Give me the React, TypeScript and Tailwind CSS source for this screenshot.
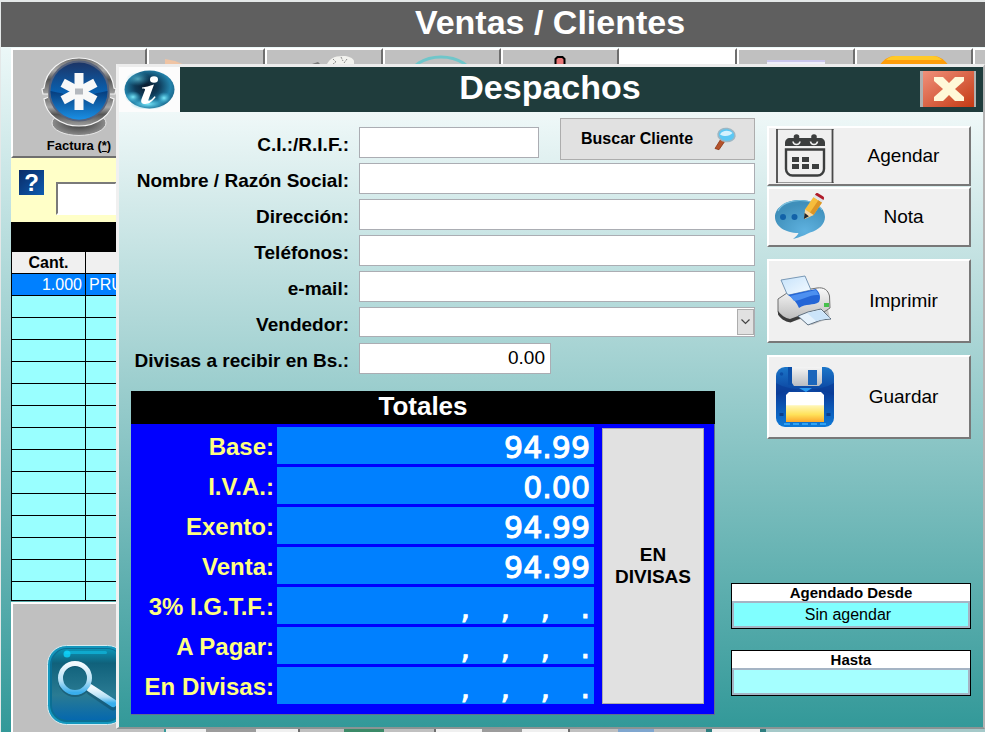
import type { ReactNode } from 'react';

const EMPTY_ROWS = Array.from({ length: 13 }, (_, i) => i);

const CUSTOMER_FIELDS = [
  { id: 'nombre', label: 'Nombre / Razón Social:' },
  { id: 'direccion', label: 'Dirección:' },
  { id: 'telefonos', label: 'Teléfonos:' },
  { id: 'email', label: 'e-mail:' },
];

const TOTALS = [
  { label: 'Base:', value: '94.99' },
  { label: 'I.V.A.:', value: '0.00' },
  { label: 'Exento:', value: '94.99' },
  { label: 'Venta:', value: '94.99' },
  { label: '3% I.G.T.F.:', value: null },
  { label: 'A Pagar:', value: null },
  { label: 'En Divisas:', value: null },
];

/* ---------- icons ---------- */

function FacturaIcon() {
  return (
    <svg width="76" height="80" viewBox="0 0 76 80" aria-hidden="true">
      <defs>
        <linearGradient id="fRing" x1="0" y1="0" x2="0" y2="1">
          <stop offset="0" stopColor="#6c6c6c" />
          <stop offset="0.35" stopColor="#a8a8a8" />
          <stop offset="0.6" stopColor="#555" />
          <stop offset="1" stopColor="#a0a0a0" />
        </linearGradient>
        <linearGradient id="fTop" x1="0" y1="0" x2="0" y2="1">
          <stop offset="0" stopColor="#1c3566" />
          <stop offset="0.5" stopColor="#0a5fae" />
          <stop offset="1" stopColor="#0b7fd6" />
        </linearGradient>
        <linearGradient id="fLow" x1="0" y1="0" x2="0" y2="1">
          <stop offset="0" stopColor="#063c7c" />
          <stop offset="1" stopColor="#1a8fe4" />
        </linearGradient>
        <radialGradient id="fShadow">
          <stop offset="0" stopColor="#303030" />
          <stop offset="1" stopColor="#8d8d8d" />
        </radialGradient>
      </defs>
      <ellipse cx="38" cy="66" rx="27" ry="12.500" fill="url(#fShadow)" stroke="#e6e6e6" strokeWidth="1" />
      <path d="M3 31C5 13 20 1 38 1s33 12 35 30l2 1-1 5h-72l-1-5z" fill="url(#fRing)" stroke="#f4f4f4" strokeWidth="1.200" />
      <path d="M3 42c2 16 17 27 35 27s33-11 35-27l-5-2H8z" fill="url(#fRing)" stroke="#f4f4f4" strokeWidth="1.200" />
      <path d="M7 34h62v10H7z" fill="#8a8a8a" />
      <circle cx="38" cy="34" r="30.500" fill="#56627c" />
      <circle cx="38" cy="34" r="28.500" fill="url(#fTop)" />
      <path d="M9.500 34c10 2 16 3 28.500 8 12-5 18-6 28.500-8a28.500 28.500 0 0 1-57 0z" fill="url(#fLow)" />
      <g fill="#f8f8f8">
        <rect x="33.500" y="16" width="9" height="37" />
        <rect x="33.500" y="16" width="9" height="37" transform="rotate(62 38 34.500)" />
        <rect x="33.500" y="16" width="9" height="37" transform="rotate(-62 38 34.500)" />
      </g>
      <rect x="34" y="31.500" width="8" height="6" fill="#b4b8be" />
    </svg>
  );
}

function SearchTileIcon() {
  return (
    <svg width="80" height="80" viewBox="0 0 80 80" className="shrink-0" aria-hidden="true">
      <defs>
        <linearGradient id="sBg" x1="0" y1="0" x2="0" y2="1">
          <stop offset="0" stopColor="#0b93b4" />
          <stop offset="0.2" stopColor="#10617b" />
          <stop offset="0.65" stopColor="#2a7b93" />
          <stop offset="1" stopColor="#0568ae" />
        </linearGradient>
        <linearGradient id="sGlass" x1="0" y1="0" x2="0" y2="1">
          <stop offset="0" stopColor="#f2fafe" />
          <stop offset="0.6" stopColor="#b4e0f6" />
          <stop offset="1" stopColor="#3aaeec" />
        </linearGradient>
      </defs>
      <rect x="0.500" y="0.500" width="79" height="79" rx="19" fill="#1497bd" stroke="#d8ecf1" strokeWidth="1" />
      <rect x="3" y="3" width="74" height="74" rx="17" fill="#0b6f94" />
      <rect x="5" y="4" width="70" height="71" rx="15" fill="url(#sBg)" />
      <rect x="18" y="6" width="42" height="3" rx="1.500" fill="#0fa9cd" />
      <circle cx="20" cy="9" r="3.500" fill="#0ed7ff" opacity="0.8" />
      <path d="M44 46L66 61" stroke="#0b3f57" strokeWidth="9" strokeLinecap="round" opacity="0.4" />
      <circle cx="28" cy="35" r="15" fill="none" stroke="#0b3f57" strokeWidth="4" opacity="0.4" />
      <path d="M43 43L66 58" stroke="url(#sGlass)" strokeWidth="8" strokeLinecap="round" />
      <circle cx="28" cy="33" r="14.500" fill="none" stroke="url(#sGlass)" strokeWidth="5" />
    </svg>
  );
}

function InfoIcon() {
  return (
    <svg width="51" height="39" viewBox="0 0 51 39" aria-hidden="true">
      <defs>
        <radialGradient id="iBg" cx="0.45" cy="0.42" r="0.6">
          <stop offset="0" stopColor="#0a1a2c" />
          <stop offset="0.4" stopColor="#0e3a58" />
          <stop offset="0.78" stopColor="#2383ab" />
          <stop offset="1" stopColor="#1b6488" />
        </radialGradient>
        <radialGradient id="iGlow">
          <stop offset="0" stopColor="#7ce8f8" />
          <stop offset="1" stopColor="#3fb4d6" stopOpacity="0" />
        </radialGradient>
      </defs>
      <ellipse cx="25.500" cy="19.500" rx="25" ry="19" fill="url(#iBg)" />
      <ellipse cx="14" cy="9" rx="12" ry="7" fill="url(#iGlow)" opacity="0.6" />
      <ellipse cx="24" cy="34" rx="18" ry="6" fill="url(#iGlow)" />
      <ellipse cx="40" cy="28" rx="7" ry="6" fill="url(#iGlow)" />
      <ellipse cx="9" cy="27" rx="8" ry="6" fill="url(#iGlow)" />
      <ellipse cx="30" cy="9.500" rx="4" ry="3.300" fill="#fff" />
      <path d="M18 17.500c4-.5 7-1.500 12-3l-5.500 15c-.6 1.700.8 1.700 2.200.6 1.600-1.200 2.600-2.400 3.800-3.800l1.200.8c-3 4.200-6.500 7-10.500 7-3.600 0-4.800-2.200-3.600-5.400l3.400-8.700c.5-1.300-.8-1.500-3-1.500z" fill="#fff" />
    </svg>
  );
}

function MagnifierIcon() {
  return (
    <svg width="24" height="24" viewBox="0 0 24 24" aria-hidden="true">
      <path d="M8.500 11L2 21.500l4 1.200L12 14z" fill="#b5532c" stroke="#8a3513" strokeWidth="0.800" />
      <ellipse cx="13.500" cy="8" rx="8.500" ry="6.500" fill="#5cc8f4" stroke="#9db7c4" strokeWidth="1.600" transform="rotate(8 13.500 8)" />
      <path d="M7 7.500c2-4 8.500-5 12.500-1.500-3 3.500-8 4-12.500 1.500z" fill="#d4f2fe" />
    </svg>
  );
}

function CalendarIcon() {
  return (
    <svg width="58" height="54" viewBox="0 0 58 54" aria-hidden="true">
      <path d="M0 .5h58M0 53.500h58" stroke="#9a9a9a" />
      <path d="M1 0v54M56.500 0v54" stroke="#4a4a4a" strokeWidth="1.800" />
      <path d="M9 17v-3c0-3 2-5 5-5h30c3 0 5 2 5 5v3z" fill="#3c3e3e" />
      <circle cx="20.500" cy="8" r="2.800" fill="#3c3e3e" />
      <circle cx="38" cy="8" r="2.800" fill="#3c3e3e" />
      <path d="M17 12.500c.5 4 6.500 4 7 0M34.500 12.500c.5 4 6.500 4 7 0" fill="none" stroke="#f0f0f0" strokeWidth="1.600" />
      <path d="M10 20.500h38V40a6.500 6.500 0 0 1-6.500 6.500h-25A6.500 6.500 0 0 1 10 40z" fill="none" stroke="#3c3e3e" strokeWidth="2.400" />
      <path d="M16 28h7v5h-7zM26 28h7v5h-7zM16 35h7v5h-7zM26 35h7v5h-7zM36 35h7v5h-7z" fill="#3c3e3e" />
    </svg>
  );
}

function NoteIcon() {
  return (
    <svg width="58" height="48" viewBox="0 0 58 48" className="-ml-px" aria-hidden="true">
      <defs>
        <radialGradient id="nBg" cx="0.6" cy="0.8" r="0.7">
          <stop offset="0" stopColor="#5fb2e0" />
          <stop offset="1" stopColor="#3f8fba" />
        </radialGradient>
      </defs>
      <path d="M25 7c14 0 25 7.500 25 17 0 7-6 13-15 15.500-4 2-9 4.500-17 6.500 3-2.500 5-4.500 5.500-6C10 40 0 33 0 24 0 14.500 11 7 25 7z" fill="url(#nBg)" />
      <path d="M3 18C6 11 15 7.500 25 7.500S44 11 47 17" fill="none" stroke="#7cc0de" strokeWidth="1.200" />
      <circle cx="8" cy="24" r="3" fill="#1262a8" />
      <circle cx="19.500" cy="24" r="3" fill="#1262a8" />
      <path d="M30 16.500L38.500 4l8.500 5.500-8.500 12.500-9 4z" fill="#f6bd3c" />
      <path d="M35 19.500L43.500 7l3.500 2.500L38.500 22z" fill="#dc9526" />
      <path d="M30 16.500l8.500 5.500-9 4z" fill="#f3d6a5" />
      <path d="M29.700 20l4.200 3.200-5 2.800z" fill="#22262c" />
      <path d="M38.500 4l1.500-2.500 8.500 5.500-1.500 2.500z" fill="#dfe4e8" />
      <path d="M40 1.800c.8-1.600 1.800-2.200 3-1.500l5 3c1.300.8 1.300 2 .5 3.700z" fill="#b01c2a" />
    </svg>
  );
}

function PrinterIcon() {
  return (
    <svg width="58" height="52" viewBox="0 0 58 52" aria-hidden="true">
      <defs>
        <linearGradient id="pBody" x1="0" y1="0" x2="0" y2="1">
          <stop offset="0" stopColor="#fafafa" />
          <stop offset="1" stopColor="#b9b9b9" />
        </linearGradient>
        <linearGradient id="pPaper" x1="0" y1="0" x2="1" y2="1">
          <stop offset="0" stopColor="#c5e2fb" />
          <stop offset="1" stopColor="#f5fbff" />
        </linearGradient>
      </defs>
      <path d="M2 38l12 9 12-3 10 6 18-7-2-8z" fill="#8b8b8b" opacity="0.4" />
      <path d="M2 24l9-6 30-5c7-1 11 2 12.500 8l.5 12-6 4-24 5-10 4c-5-1-9-4-12-9z" fill="url(#pBody)" stroke="#6f6f6f" strokeWidth="1" />
      <path d="M11 19L5 5l24-4 6 14-22 5z" fill="url(#pPaper)" stroke="#6d8fae" strokeWidth="0.900" />
      <path d="M2 36c3 4 7 7 12 8l11-4 .5 3-11 4.500c-6-1-10-4-12.500-8z" fill="#3c3c3c" />
      <path d="M12 20l28-6c4 4 5 8 3 13-6 4-13 1-20 6-2-5-6-10-11-13z" fill="#2465d6" />
      <path d="M14 21l26-6 3 5c-9-1-16 5-25 6z" fill="#4d90f0" />
      <path d="M22 41l10-4 13-3 10 10-10 1-13 5z" fill="#e6f2fc" stroke="#5d6f80" strokeWidth="1" />
      <path d="M31 38l13-3 10 8-14 3z" fill="#cbe4fa" />
      <rect x="48" y="28" width="5" height="4" fill="#46c04c" />
    </svg>
  );
}

function FloppyIcon() {
  return (
    <svg width="58" height="60" viewBox="0 0 58 60" aria-hidden="true">
      <defs>
        <linearGradient id="dBody" x1="0" y1="0" x2="0" y2="1">
          <stop offset="0" stopColor="#1b76c9" />
          <stop offset="0.45" stopColor="#0a3f9c" />
          <stop offset="1" stopColor="#0f7ad8" />
        </linearGradient>
        <linearGradient id="dLabel" x1="0" y1="0" x2="0" y2="1">
          <stop offset="0.42" stopColor="#ffffff" />
          <stop offset="0.46" stopColor="#fff6b4" />
          <stop offset="0.75" stopColor="#ffe25a" />
          <stop offset="1" stopColor="#fba62c" />
        </linearGradient>
        <linearGradient id="dMetal" x1="0" y1="0" x2="0" y2="1">
          <stop offset="0" stopColor="#f4f4f4" />
          <stop offset="1" stopColor="#b8bcc2" />
        </linearGradient>
      </defs>
      <rect width="58" height="60" rx="9" fill="url(#dBody)" />
      <path d="M0 16c14 9 44 9 58 0v12c-16-7-42-7-58 0z" fill="#0a3a94" opacity="0.6" />
      <path d="M12 0h4v18h-4z" fill="#0b4ea8" />
      <path d="M16 0h30v16l-3 3H18l-2-3z" fill="url(#dMetal)" />
      <rect x="32" y="3" width="9" height="15" fill="#1c66bb" />
      <path d="M23 21h13l-6 4z" fill="#2a9af0" />
      <path d="M10 28l3-3h32l3 3v27H10z" fill="url(#dLabel)" />
      <path d="M8 57h42" stroke="#2fa3f4" strokeWidth="2" strokeDasharray="6 3" />
      <circle cx="5.500" cy="7" r="1.800" fill="#0c4fa8" />
      <rect x="3.500" y="46" width="4" height="3" fill="#0a3f8c" />
      <rect x="50.500" y="46" width="4" height="3" fill="#0a3f8c" />
    </svg>
  );
}

/* ---------- window behind the dialog ---------- */

function ToolTile({ children, white }: { children?: ReactNode; white?: boolean }) {
  return (
    <div
      className={`flex w-[118px] shrink-0 justify-center border-2 border-t-white border-r-[#6e6e6e] border-b-[#808080] border-l-white pt-[5px] ${
        white ? 'bg-white' : 'bg-[#c0c0c0]'
      }`}
    >
      {children}
    </div>
  );
}

function SalesWindow() {
  return (
    <div className="flex h-full flex-col border-t-2 border-l border-t-[#e4e8e8] border-l-[#e4e8e8] bg-linear-to-b/srgb from-[#f8fefe] to-[#339999]">
      <h1 className="flex h-[45px] shrink-0 items-center justify-center bg-[#5f5f5f] pb-1 pl-[114px] text-[34px] font-bold text-white">
        Ventas / Clientes
      </h1>
      <div className="flex min-h-0 flex-1 flex-col pt-px pl-[10px]">
        <div className="flex h-[110px] shrink-0 overflow-hidden">
          <button
            type="button"
            className="flex w-[136px] shrink-0 flex-col items-center border-2 border-t-white border-r-[#6e6e6e] border-b-[#6e6e6e] border-l-white bg-[#c0c0c0] pt-[7px] text-[13px] leading-[18px] font-bold"
          >
            <FacturaIcon />
            <span>
              Factura (<u>*</u>)
            </span>
          </button>
          <ToolTile>
            <svg width="82" height="20" viewBox="0 0 82 20" aria-hidden="true">
              <path d="M0 4l10 2 10 4v10H0z" fill="#efc4a4" />
            </svg>
          </ToolTile>
          <ToolTile>
            <svg width="60" height="20" viewBox="0 0 60 20" aria-hidden="true">
              <path d="M18 9l6-2 3 3v8H18z" fill="#777" />
              <path d="M32 12c2-8 8-11 17-11s12 4 14 12v7H32z" fill="#f2f2ee" />
              <path d="M39 4l3 3-3 2M47 2l2 4M53 4l-3 4" fill="none" stroke="#8b8b8b" strokeDasharray="2 1" />
            </svg>
          </ToolTile>
          <ToolTile>
            <svg width="70" height="20" viewBox="0 0 70 20" aria-hidden="true">
              <ellipse cx="34" cy="22" rx="31" ry="20" fill="none" stroke="#6fc6ca" strokeWidth="3" />
            </svg>
          </ToolTile>
          <ToolTile>
            <svg width="20" height="20" viewBox="0 0 20 20" aria-hidden="true">
              <path d="M5.500 20V4l2-2h5l2 2v16z" fill="#e87878" stroke="#000" strokeWidth="2" />
            </svg>
          </ToolTile>
          <ToolTile white />
          <ToolTile>
            <svg width="60" height="20" viewBox="0 0 60 20" aria-hidden="true">
              <path d="M1 5h58v15H1z" fill="#eeeef8" />
              <path d="M1 6h58" stroke="#bcb8e8" strokeWidth="1.500" />
            </svg>
          </ToolTile>
          <ToolTile>
            <svg width="72" height="20" viewBox="0 0 72 20" aria-hidden="true">
              <path d="M0 12Q8 1 16 1h40q8 0 16 11v8H0z" fill="#ff9d0a" />
              <path d="M8 5q4-4 9-4h38q5 0 9 4z" fill="#ffc928" />
            </svg>
          </ToolTile>
          <ToolTile />
        </div>
        <div className="flex h-16 w-[106px] shrink-0 gap-3 bg-[#ffffc8] pt-3 pl-2">
          <button
            type="button"
            aria-label="Ayuda"
            className="flex size-[25px] shrink-0 items-center justify-center bg-linear-to-br/srgb from-[#0a2a66] to-[#0d5cb0] text-[24px] leading-6 font-bold text-white"
          >
            ?
          </button>
          <input
            aria-label="Código"
            className="mt-3 h-[33px] w-full min-w-0 border-2 border-t-[#7a7a7a] border-r-white border-b-white border-l-[#7a7a7a] bg-white"
          />
        </div>
        <div className="h-[29px] w-[106px] shrink-0 bg-black" />
        <table className="w-[130px] table-fixed border-collapse text-[16px] leading-5">
          <colgroup>
            <col className="w-[74px]" />
            <col />
          </colgroup>
          <thead>
            <tr className="h-[22px] bg-[#f0f0f0]">
              <th className="border border-black p-0 text-center font-bold">Cant.</th>
              <th className="border border-black p-0" />
            </tr>
          </thead>
          <tbody>
            <tr className="h-[22px] bg-[#0080ff] text-white">
              <td className="border border-black p-0 pr-[3px] text-right">1.000</td>
              <td className="overflow-hidden border border-black p-0 pl-[3px]">PRU</td>
            </tr>
            {EMPTY_ROWS.map((row) => (
              <tr key={row} className="h-[22px] bg-[#99ffff]">
                <td className="border border-black p-0" />
                <td className="border border-black p-0" />
              </tr>
            ))}
            <tr className="h-[19px] bg-[#99ffff]">
              <td className="border border-black p-0" />
              <td className="border border-black p-0" />
            </tr>
          </tbody>
        </table>
        <div className="mt-px flex min-h-0 flex-1 items-end overflow-hidden">
          <div className="flex h-full w-[153px] shrink-0 items-start border-t-2 border-l-2 border-white bg-[#c0c0c0] pt-[41px] pl-[34px]">
            <SearchTileIcon />
          </div>
          <div className="ml-0.5 flex h-full min-w-0 flex-1">
            <div className="w-10 bg-[#f0f0f0]" />
            <div className="w-[50px] bg-[#9c9c9c]" />
            <div className="w-[42px] bg-[#f0f0f0]" />
            <div className="w-[46px] border-l-2 border-[#6e6e6e] bg-[#c0c0c0]" />
            <div className="w-10 bg-[#3b8a68]" />
            <div className="w-[52px] border-r-2 border-[#6e6e6e] bg-[#c0c0c0]" />
            <div className="w-[46px] bg-[#f0f0f0]" />
            <div className="w-10 bg-[#9c9c9c]" />
            <div className="w-12 border-r-2 border-[#6e6e6e] bg-[#f0f0f0]" />
            <div className="w-12 bg-[#c0c0c0]" />
            <div className="w-9 bg-[#7fa6cf]" />
            <div className="w-[52px] bg-[#c0c0c0]" />
            <div className="w-1.5 bg-[#2d7f80]" />
            <div className="w-12 bg-[#f0f0f0]" />
            <div className="w-1.5 bg-[#2d7f80]" />
            <div className="flex-1 bg-[#a5c9c9]" />
          </div>
        </div>
      </div>
    </div>
  );
}

/* ---------- dialog ---------- */

function FieldLabel({ htmlFor, children }: { htmlFor: string; children: ReactNode }) {
  return (
    <label htmlFor={htmlFor} className="w-[218px] shrink-0 pt-1 text-right text-[19px] leading-[27px] font-bold whitespace-nowrap">
      {children}
    </label>
  );
}

function ActionButton({ icon, label, tall }: { icon: ReactNode; label: string; tall?: boolean }) {
  return (
    <button
      type="button"
      className={`flex w-full items-center border-2 border-t-white border-r-[#787878] border-b-[#787878] border-l-white bg-[#f0f0f0] pl-[7px] text-[19px] ${
        tall ? 'h-[84px]' : 'h-[60px]'
      }`}
    >
      <span className="flex w-[62px] shrink-0 items-center">{icon}</span>
      <span className="flex-1 text-center">{label}</span>
    </button>
  );
}

function ScheduleBox({ id, label, value, tone }: { id: string; label: string; value: string; tone: string }) {
  return (
    <div className="flex h-[46px] flex-col border border-black bg-white">
      <label htmlFor={id} className="h-[17px] text-center text-[15px] leading-[17px] font-bold">
        {label}
      </label>
      <input
        id={id}
        readOnly
        defaultValue={value}
        className={`w-full min-w-0 flex-1 border-2 border-[#a5b4c4] pr-1.5 text-center text-[16px] leading-5 ${tone}`}
      />
    </div>
  );
}

function Totals() {
  return (
    <section className="mt-[17px] mr-10">
      <h3 className="flex h-[33px] items-center justify-center bg-black pb-0.5 text-[26px] font-bold text-white">Totales</h3>
      <div className="flex gap-2 border-r border-b border-[#5f6f8f] bg-[#0000ff] pt-[3px] pr-[10px] pb-[10px]">
        <dl className="flex flex-1 flex-col gap-[3px]">
          {TOTALS.map((row) => (
            <div key={row.label} className="flex h-[37px] gap-[3px]">
              <dt className="w-[143px] pt-px text-right text-[24px] leading-[37px] font-bold whitespace-nowrap text-[#ffff80]">
                {row.label}
              </dt>
              <dd className="flex flex-1 justify-end bg-[#0080ff] pt-0.5 pr-1 font-['DejaVu_Sans',Verdana,sans-serif] text-[30px] leading-[37px] text-white [-webkit-text-stroke:1px_white]">
                {row.value ??
                  [',', ',', ',', '.'].map((mark, i) => (
                    <span key={i} className="w-10 text-right">
                      {mark}
                    </span>
                  ))}
              </dd>
            </div>
          ))}
        </dl>
        <button
          type="button"
          className="mt-px w-[102px] border border-[#adadad] bg-[#e1e1e1] text-[19px] leading-[22px] font-bold"
        >
          EN
          <br />
          DIVISAS
        </button>
      </div>
    </section>
  );
}

function DispatchDialog() {
  return (
    <div
      role="dialog"
      aria-labelledby="dialog-title"
      className="absolute top-16 right-0 bottom-[3px] left-[116px] flex flex-col border-t-[3px] border-r-2 border-b-2 border-l-[3px] border-t-[#ececec] border-r-[#b4b4b4] border-b-[#8a9494] border-l-[#f0f0f0] bg-linear-to-b/srgb from-[#fdffff] to-[#339999]"
    >
      <header className="flex h-[45px] shrink-0 bg-[#1f3c3c]">
        <div className="flex w-[61px] items-center bg-[#fcfcfc] pl-[5px]">
          <InfoIcon />
        </div>
        <h2 id="dialog-title" className="flex flex-1 items-center justify-center pb-1 text-[34px] font-bold text-white">
          Despachos
        </h2>
        <button
          type="button"
          aria-label="Cerrar"
          className="mt-1 mr-[7px] flex h-9 w-14 items-center justify-center border-r-2 border-l-[3px] border-[#b0b0b0] bg-linear-to-br/srgb from-[#f0907a] to-[#c43a14]"
        >
          <svg width="30" height="24" viewBox="0 0 30 24" aria-hidden="true">
            <path d="M0 0h9l6 6 6-6h9v4l-9 8 9 8v4h-9l-6-6-6 6H0v-4l9-8-9-8z" fill="#fff8d8" />
          </svg>
        </button>
      </header>
      <div className="flex min-h-0 flex-1 gap-3 pr-3 pl-3">
        <div className="flex min-w-0 flex-1 flex-col pt-1.5">
          <form className="flex flex-col gap-[5px]" onSubmit={(e) => e.preventDefault()}>
            <div className="flex h-10 items-end gap-[10px]">
              <FieldLabel htmlFor="rif">C.I.:/R.I.F.:</FieldLabel>
              <input id="rif" className="h-[31px] w-[180px] border border-[#abadb3] bg-white px-1 text-[19px]" />
              <button
                type="button"
                className="ml-auto flex h-[42px] w-[195px] shrink-0 items-center gap-5 self-start border border-[#adadad] bg-[#e1e1e1] pl-5 text-[16px] font-bold"
              >
                Buscar Cliente
                <MagnifierIcon />
              </button>
            </div>
            {CUSTOMER_FIELDS.map((field) => (
              <div key={field.id} className="flex h-[31px] gap-[10px]">
                <FieldLabel htmlFor={field.id}>{field.label}</FieldLabel>
                <input id={field.id} className="min-w-0 flex-1 border border-[#abadb3] bg-white px-1 text-[19px]" />
              </div>
            ))}
            <div className="flex h-[31px] gap-[10px]">
              <FieldLabel htmlFor="vendedor">Vendedor:</FieldLabel>
              <div className="relative flex-1">
                <select id="vendedor" className="h-[30px] w-full appearance-none border border-[#abadb3] bg-white px-1 text-[19px]">
                  <option value="" />
                </select>
                <span className="pointer-events-none absolute top-0.5 right-px flex h-[26px] w-[17px] items-center justify-center border border-[#adadad] bg-[#e1e1e1]">
                  <svg width="9" height="6" viewBox="0 0 9 6" aria-hidden="true">
                    <path d="M.5.5l4 4 4-4" fill="none" stroke="#444" strokeWidth="1.200" />
                  </svg>
                </span>
              </div>
            </div>
            <div className="flex h-[31px] gap-[10px]">
              <FieldLabel htmlFor="divisas">Divisas a recibir en Bs.:</FieldLabel>
              <input
                id="divisas"
                defaultValue="0.00"
                className="w-[192px] border border-[#abadb3] bg-white px-[5px] text-right text-[19px]"
              />
            </div>
          </form>
          <Totals />
        </div>
        <div className="flex w-[204px] shrink-0 flex-col gap-3 pt-3.5">
          <div className="flex flex-col gap-px">
            <ActionButton icon={<CalendarIcon />} label="Agendar" />
            <ActionButton icon={<NoteIcon />} label="Nota" />
          </div>
          <ActionButton icon={<PrinterIcon />} label="Imprimir" tall />
          <ActionButton icon={<FloppyIcon />} label="Guardar" tall />
          <div className="mt-33 -ml-9 flex flex-col gap-[21px]">
            <ScheduleBox id="desde" label="Agendado Desde" value="Sin agendar" tone="bg-[#80ffff]" />
            <ScheduleBox id="hasta" label="Hasta" value="" tone="bg-[#a5ffff]" />
          </div>
        </div>
      </div>
    </div>
  );
}

export default function App() {
  return (
    <main className="relative h-screen min-h-[732px] overflow-hidden font-['Liberation_Sans',Arial,sans-serif] text-black">
      <SalesWindow />
      <DispatchDialog />
    </main>
  );
}
